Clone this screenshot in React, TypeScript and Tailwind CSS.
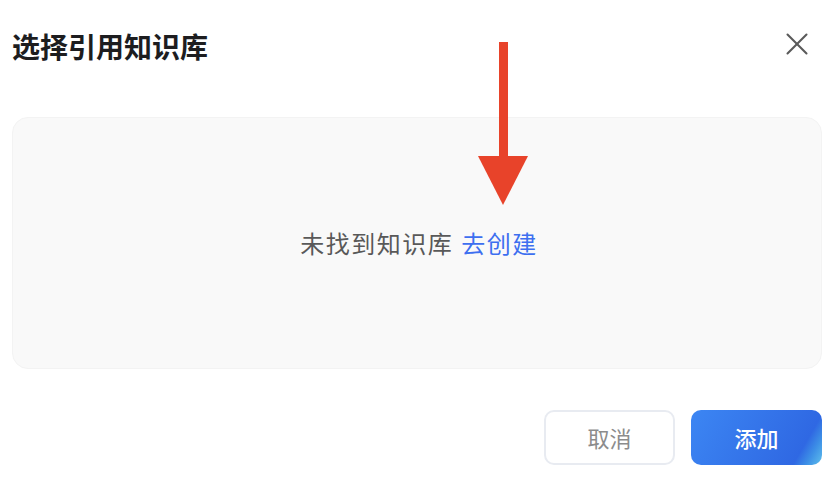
import { X } from "lucide-react";

const App = () => {
  return (
    <div
      className="relative w-[838px] h-[482px] bg-white pl-[12px] pr-[16px] pt-[26px]"
      style={{ fontFamily: '"Noto Sans CJK SC", "Noto Sans", sans-serif' }}
    >
      {/* header */}
      <div className="flex items-center justify-between h-[40px]">
        <h2 className="text-[28px] font-bold text-[#1d1d1f] leading-[40px]">
          选择引用知识库
        </h2>
        <button className="flex items-center justify-center w-[38px] h-[38px] mr-[6px] -mt-[4px] text-[#5a5a5a]">
          <X size={38} strokeWidth={1.3} />
        </button>
      </div>

      {/* empty state */}
      <div className="mt-[51px] h-[252px] rounded-[16px] bg-[#f9f9f9] border border-[#f3f3f3] flex items-center justify-center">
        <p className="text-[24px] text-[#595959] tracking-[1.5px] leading-none pl-[4px]">
          未找到知识库
          <span className="ml-[8px] text-[#3d6ff0] cursor-pointer">去创建</span>
        </p>
      </div>

      {/* footer */}
      <div className="mt-[41px] flex justify-end gap-[16px]">
        <button className="w-[131px] h-[55px] rounded-[10px] border-2 border-[#e8ebf1] bg-white text-[22px] text-[#8c8c8c]">
          取消
        </button>
        <button className="w-[131px] h-[55px] rounded-[10px] text-[22px] font-medium text-white bg-[linear-gradient(120deg,#3c86f3_0%,#2f68e3_82%,#3d8fe6_90%,#5fc0ec_100%)]">
          添加
        </button>
      </div>

      {/* annotation arrow */}
      <svg className="absolute left-[470px] top-[40px]" width="70" height="170" viewBox="0 0 70 170">
        <rect x="29" y="2" width="9" height="120" fill="#e8432a" />
        <polygon points="8,116 58,116 33,165" fill="#e8432a" />
      </svg>
    </div>
  );
};

export default App;
